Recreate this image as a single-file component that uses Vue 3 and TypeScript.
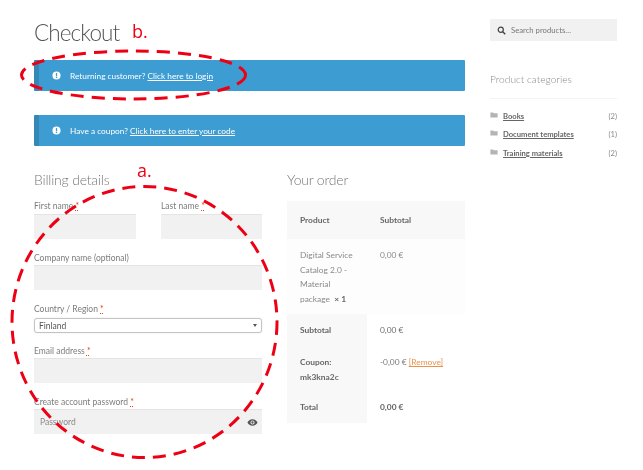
<script setup lang="ts">
interface Category { name: string; count: number }
const categories: Category[] = [
  { name: 'Books', count: 2 },
  { name: 'Document templates', count: 1 },
  { name: 'Training materials', count: 2 },
]
</script>

<template>
  <div class="page">
    <main class="main">
      <h1>Checkout</h1>
      <div class="notice first">
        <svg class="info" viewBox="0 0 10 10"><circle cx="5" cy="5" r="4.5" fill="#fff" /><rect x="4.3" y="2.2" width="1.4" height="3.6" fill="#3d9cd2" /><rect x="4.3" y="6.4" width="1.4" height="1.4" fill="#3d9cd2" /></svg>
        <span>Returning customer? <a>Click here to login</a></span>
      </div>
      <div class="notice second">
        <svg class="info" viewBox="0 0 10 10"><circle cx="5" cy="5" r="4.5" fill="#fff" /><rect x="4.3" y="2.2" width="1.4" height="3.6" fill="#3d9cd2" /><rect x="4.3" y="6.4" width="1.4" height="1.4" fill="#3d9cd2" /></svg>
        <span>Have a coupon? <a>Click here to enter your code</a></span>
      </div>
      <div class="columns">
        <section class="billing">
          <h2>Billing details</h2>
          <div class="names">
            <div><label>First name <i>*</i></label><div class="input"></div></div>
            <div><label>Last name <i>*</i></label><div class="input"></div></div>
          </div>
          <label class="company">Company name (optional)</label>
          <div class="input"></div>
          <label class="country">Country / Region <i>*</i></label>
          <div class="select">Finland<span class="caret"></span></div>
          <label class="email">Email address <i>*</i></label>
          <div class="input"></div>
          <label class="pass">Create account password <i>*</i></label>
          <div class="input password">
            <span>Password</span>
            <svg class="eye" viewBox="0 0 24 24"><path fill="#555" d="M12 5C7 5 2.700 8.100 1 12c1.700 3.900 6 7 11 7s9.300-3.100 11-7c-1.700-3.900-6-7-11-7zm0 11.500a4.500 4.500 0 1 1 0-9 4.500 4.500 0 0 1 0 9zm0-7a2.500 2.500 0 1 0 0 5 2.500 2.500 0 0 0 0-5z" /></svg>
          </div>
        </section>
        <section class="order">
          <h2>Your order</h2>
          <div class="table">
            <div class="row head"><b>Product</b><b>Subtotal</b></div>
            <div class="row item"><span>Digital Service Catalog 2.0 - Material package&nbsp; <b>× 1</b></span><span>0,00 €</span></div>
            <div class="row foot subtotal"><b>Subtotal</b><span>0,00 €</span></div>
            <div class="row foot coupon"><b>Coupon: mk3kna2c</b><span>-0,00 € <a>[Remove]</a></span></div>
            <div class="row foot total"><b>Total</b><b>0,00 €</b></div>
          </div>
        </section>
      </div>
    </main>
    <aside class="side">
      <div class="search">
        <svg viewBox="0 0 12 12"><circle cx="5" cy="5" r="3.400" fill="none" stroke="#444" stroke-width="1.600" /><path d="M7.600 7.600 11 11" stroke="#444" stroke-width="1.900" /></svg>
        <span>Search products…</span>
      </div>
      <h3>Product categories</h3>
      <ul>
        <li v-for="c in categories" :key="c.name">
          <svg viewBox="0 0 12 10"><path fill="#b4b4b4" d="M0 1h4.500l1 1H12v7H0z" /></svg>
          <a>{{ c.name }}</a>
          <span>({{ c.count }})</span>
        </li>
      </ul>
    </aside>
    <svg class="marks" viewBox="0 0 643 470">
      <ellipse cx="144.500" cy="322" rx="132.500" ry="135.500" fill="none" stroke="#ee0014" stroke-width="3" stroke-dasharray="13 8" />
      <ellipse cx="133.500" cy="75" rx="112" ry="24" fill="none" stroke="#ee0014" stroke-width="3" stroke-dasharray="13 8" />
    </svg>
    <span class="mark-b">b.</span>
    <span class="mark-a">a.</span>
  </div>
</template>

<style>
html, body { margin: 0; background: #fff; overflow: hidden; }
</style>

<style scoped>
.page { position: relative; width: 643px; height: 470px; overflow: hidden; display: flex; padding: 19px 0 0 34px; box-sizing: border-box; gap: 25px; font-family: Lato, "Open Sans", sans-serif; font-size: 8.400px; color: #6d6d6d; filter: blur(0.35px); }
.main { width: 431px; flex: none; }
h1 { margin: 0 0 10px; height: 31px; font: 300 22.500px/28px Lato, sans-serif; letter-spacing: -0.9px; color: #555; }
.notice { height: 31px; background: #3d9cd2; border-left: 5px solid #3587b6; box-sizing: border-box; display: flex; align-items: center; padding-left: 13px; gap: 9px; color: #fff; border-radius: 1px; font-size: 8.300px; }
.notice a { text-decoration: underline; }
.second { margin-top: 24px; }
.info { width: 9px; height: 9px; flex: none; }
.columns { display: flex; margin-top: 24px; gap: 25px; }
.billing { width: 228px; flex: none; }
.order { width: 178px; flex: none; }
h2 { margin: 0; height: 21px; font: 300 14px/20px Lato, sans-serif; letter-spacing: -0.2px; color: #777; }
label { display: block; height: 12px; line-height: 12px; font-size: 8.500px; color: #7c7c7c; }
label i { color: #e2401c; font-style: normal; text-decoration: underline dotted; }
.names { display: grid; grid-template-columns: 102px 101px; gap: 25px; margin-top: 9px; }
.names label { margin-bottom: 2px; }
.input { height: 25px; background: #f1f1f1; border-top: 1px solid #e4e4e4; box-sizing: border-box; }
.company { margin-top: 13px; margin-bottom: 1px; }
.country { margin-top: 13px; margin-bottom: 3px; }
.select { height: 15px; border: 1px solid #c4c4c4; border-radius: 3px; box-sizing: border-box; display: flex; align-items: center; justify-content: space-between; padding: 0 4px; font-size: 8.500px; color: #555; box-shadow: 0 0 1px #bbb; }
.caret { width: 0; height: 0; border: 2.500px solid transparent; border-top: 3px solid #555; border-bottom: 0; }
.email { margin-top: 12px; margin-bottom: 1px; }
.pass { margin-top: 13px; margin-bottom: 1px; }
.password { display: flex; align-items: center; justify-content: space-between; padding: 0 4px 0 6px; color: #888; font-size: 8.500px; }
.eye { width: 11px; height: 11px; }
.table { margin-top: 10px; }
.row { display: grid; grid-template-columns: 80px 1fr; font-size: 8.400px; line-height: 14.500px; }
.row > * { padding-left: 13px; }
.row b { font-weight: 700; color: #666; }
.head { background: #f8f8f8; height: 38px; align-items: center; }
.item { background: #fdfdfd; height: 75px; padding-top: 9px; box-sizing: border-box; color: #8a8a8a; }
.item span:first-child { padding-right: 6px; }
.foot { background: linear-gradient(90deg, #f8f8f8 80px, #fff 80px); }
.subtotal { height: 32px; align-items: center; }
.coupon { height: 48px; padding-top: 9px; box-sizing: border-box; color: #7a7a7a; }
.coupon a { color: #e8914a; text-decoration: underline; }
.total { height: 29px; padding-top: 6px; box-sizing: border-box; }
.side { width: 127px; flex: none; }
.search { height: 22px; background: #f1f1f1; display: flex; align-items: center; padding-left: 7px; gap: 5px; font-size: 7.700px; color: #777; }
.search svg { width: 9px; height: 9px; }
h3 { margin: 29px 0 0; height: 22px; padding-bottom: 6px; font: 300 10.200px/18px Lato, sans-serif; color: #8a8a8a; border-bottom: 1px solid #f3f3f3; }
ul { list-style: none; margin: 8px 0 0; padding: 0; }
li { display: flex; align-items: center; height: 18.300px; font-size: 7.600px; }
li svg { width: 8px; height: 6px; margin-right: 5px; margin-top: -2px; }
li a { font-weight: 700; color: #666; text-decoration: underline; flex: 1; }
li span { color: #888; }
.marks { position: absolute; inset: 0; width: 643px; height: 470px; pointer-events: none; }
.mark-b, .mark-a { position: absolute; color: #ee0014; font-size: 18px; line-height: 20px; font-family: "Open Sans", sans-serif; }
.mark-b { left: 132px; top: 21px; }
.mark-a { left: 137px; top: 160px; }
</style>
